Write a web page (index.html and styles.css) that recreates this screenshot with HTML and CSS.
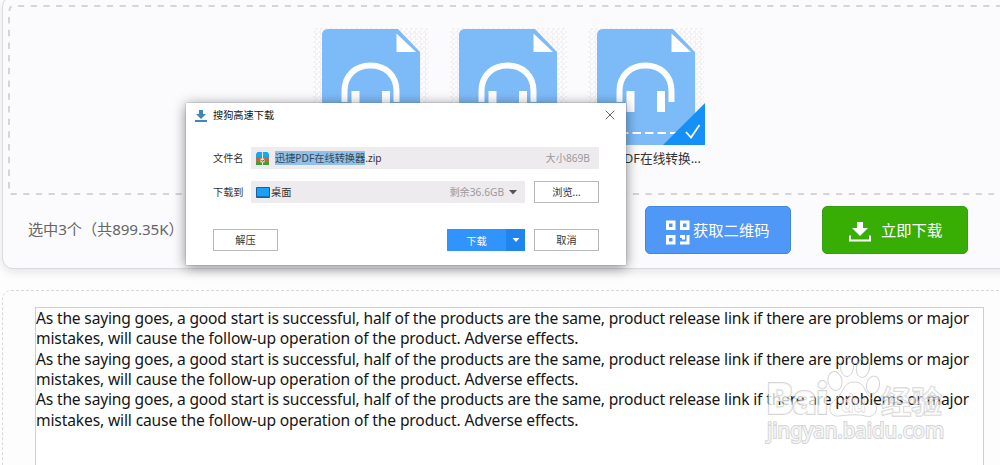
FILE: index.html
```
<!DOCTYPE html>
<html lang="zh-CN">
<head>
<meta charset="utf-8">
<title>下载</title>
<link rel="stylesheet" href="styles.css">
</head>
<body>
<svg width="0" height="0" class="defs" aria-hidden="true">
  <defs>
    <symbol id="audio-file" viewBox="0 0 98 116">
      <path d="M6 0H76L98 23V116H0V6Q0 0 6 0Z" fill="#7dbbf8"/>
      <path d="M74.500 4.500V23H94Z" fill="#fff"/>
      <path d="M22.500 73V62C22.500 46 34 36.500 48.500 36.500S74.500 46 74.500 62V73" fill="none" stroke="#fff" stroke-width="6"/>
      <path d="M29.500 62h8v21h-8zM60 62h8v21h-8z" fill="#fff"/>
      <path d="M0 104H98" stroke="#fff" stroke-width="2" stroke-dasharray="8.500 4" stroke-dashoffset="2"/>
    </symbol>
  </defs>
</svg>
<main class="page">
  <section class="panel">
    <div class="drop">
      <svg class="drop-line" width="1010" height="190">
        <path d="M10 1H1010" stroke-dasharray="6.200 6.500"/>
        <path d="M1 12V189" stroke-dasharray="6.500 6.200"/>
        <path d="M1.500 6Q1.500 2.500 3.500 1.500"/>
        <path d="M2.500 189H986" stroke-dasharray="6.200 6.500"/>
      </svg>
      <div class="files">
        <figure class="file"><div class="thumb"><svg class="doc"><use href="#audio-file"/></svg></div></figure>
        <figure class="file"><div class="thumb"><svg class="doc"><use href="#audio-file"/></svg></div></figure>
        <figure class="file">
          <div class="thumb"><svg class="doc"><use href="#audio-file"/></svg>
            <svg class="tick" viewBox="0 0 42 42"><path d="M42 0V42H0Z" fill="#1490f7"/><path d="M23 29L28 34.500L36.500 22" fill="none" stroke="#fff" stroke-width="1.800"/></svg>
          </div>
          <figcaption>迅捷PDF在线转换...</figcaption>
        </figure>
      </div>
    </div>
    <div class="bar">
      <span class="count">选中3个（共899.35K）</span>
      <button class="big blue">
        <svg width="24" height="25" viewBox="0 0 24 25" fill="none" stroke="#fff" stroke-width="3"><path d="M1.500 2h6.500v6.500H1.500zM15.500 2H22v6.500h-6.500zM1.500 16.500h6.500V23H1.500z"/><path d="M14 23h8V15M14 16.500h3.500v3"/></svg>
        <span class="qr">获取二维码</span>
      </button>
      <button class="big green">
        <svg width="22" height="20" viewBox="0 0 22 20"><path d="M8 0h6v6h5l-8 8-8-8h5z" fill="#fff"/><path d="M1 13.500V18.500H21V13.500" fill="none" stroke="#fff" stroke-width="2"/></svg>
        <span class="now">立即下载</span>
      </button>
    </div>
  </section>

  <section class="result">
    <div class="paper">
      <p class="first">As the saying goes, a good start is successful, half of the products are the same, product release link if there are problems or major</p>
      <p class="second">mistakes, will cause the follow-up operation of the product. Adverse effects.</p>
      <p class="first">As the saying goes, a good start is successful, half of the products are the same, product release link if there are problems or major</p>
      <p class="second">mistakes, will cause the follow-up operation of the product. Adverse effects.</p>
      <p class="first">As the saying goes, a good start is successful, half of the products are the same, product release link if there are problems or major</p>
      <p class="second">mistakes, will cause the follow-up operation of the product. Adverse effects.</p>
    </div>
  </section>
</main>

<section class="dialog">
  <header class="head">
    <svg width="12" height="12" viewBox="0 0 12 12" fill="#3e86bd"><path d="M4 0h4v4h3L6 9 1 4h3zM0 10h12v2H0z"/></svg>
    <h1>搜狗高速下载</h1>
    <svg class="close" width="10" height="10" viewBox="0 0 10 10"><path d="M.7.700l8.600 8.600M9.300.700L.7 9.300" stroke="#666" stroke-width="1"/></svg>
  </header>
  <div class="row">
    <label>文件名</label>
    <div class="field">
      <svg class="zip" width="13" height="13" viewBox="0 0 13 13"><path d="M1.500 0H6v5H0V2zM7 0h4.500L13 2v3H7z" fill="#18a9e8"/><path d="M0 5h6v5H0zM7 5h6v5H7z" fill="#b9694a"/><path d="M0 10h6v3H0zM7 10h6v3H7z" fill="#3f9e3a"/><path d="M6 0h1v7H6z" fill="#d8eef5"/><path d="M4.500 6.500h4v4h-4z" fill="#efe3a0"/><path d="M5.500 8l1 1.500 2-2" fill="none" stroke="#54713a"/></svg>
      <span class="name"><mark>迅捷PDF在线转换器</mark>.zip</span>
      <span class="hint size">大小869B</span>
    </div>
  </div>
  <div class="row">
    <label>下载到</label>
    <div class="field">
      <svg class="desk" width="14" height="11" viewBox="0 0 14 11"><path d="M.5.500h13v10H.5z" fill="#18a0fb" stroke="#1c5f91"/><path d="M1 9.500h12" stroke="#1873b4"/></svg>
      <span class="folder">桌面</span>
      <span class="hint free">剩余36.6GB</span>
      <svg class="caret" width="8" height="5"><path d="M0 0h8L4 4.500z" fill="#555"/></svg>
    </div>
    <button class="small">浏览...</button>
  </div>
  <div class="row last">
    <button class="small">解压</button>
    <div class="go"><button class="go-main">下载</button><button class="go-more"><svg width="8" height="5"><path d="M.5 0h7L4 4z" fill="#fff"/></svg></button></div>
    <button class="small">取消</button>
  </div>
</section>

<svg class="mark" width="200" height="100" viewBox="0 0 200 100">
  <g class="ghost">
    <g class="paw">
      <ellipse cx="75" cy="24" rx="7" ry="9.500" transform="rotate(-12 75 24)"/>
      <ellipse cx="87" cy="10" rx="6.500" ry="9.500"/>
      <ellipse cx="103" cy="11" rx="6.500" ry="9.500" transform="rotate(12 103 11)"/>
      <ellipse cx="113" cy="28" rx="6.500" ry="9" transform="rotate(12 113 28)"/>
      <path d="M94 25C83 25 84 36 76 42C66 49 69 60 79 59C87 58 99 57 105 59C117 62 120 49 112 42C103 35 106 25 94 25Z"/>
    </g>
    <text class="logo" x="7" y="57" textLength="61" lengthAdjust="spacingAndGlyphs">Bai</text>
    <text class="du" x="81" y="55" textLength="25" lengthAdjust="spacingAndGlyphs">du</text>
    <text class="cn" x="121" y="56" textLength="61" lengthAdjust="spacingAndGlyphs">经验</text>
    <text class="url" x="7" y="81" textLength="177" lengthAdjust="spacingAndGlyphs">jingyan.baidu.com</text>
  </g>
</svg>
</body>
</html>
```
FILE: styles.css
```
* { box-sizing: border-box; }
body { margin: 0; width: 1000px; height: 465px; overflow: hidden; background: #fdfdfd; font-family: "Noto Sans", "Noto Sans CJK SC", sans-serif; position: relative; }
button { padding: 0; font-family: inherit; margin: 0; }
p, h1, figure { margin: 0; }
svg { display: block; flex: none; }
.defs { position: absolute; }
.page { width: 1030px; height: 465px; overflow: hidden; padding-left: 2px; }

.panel { height: 273px; margin-top: -4px; border: 1px solid #dcdadf; border-radius: 11px; background: #fbfafd; box-shadow: 0 3px 9px rgba(60, 50, 70, .12); padding: 8px 0 0 5px; }
.drop { height: 190px; position: relative; padding: 23px 0 0 305px; }
.drop-line { position: absolute; left: 0; top: 0; fill: none; stroke: #d5d4d7; stroke-width: 2; }
.files { display: flex; gap: 21px; }
.file { width: 116.400px; flex: none; }
.thumb { height: 117px; padding: 1px 0 0 9px; position: relative; background: repeating-conic-gradient(#f3f1f4 0 25%, #fdfcfe 0 50%) 0 0 / 5px 5px; }
.doc { width: 98px; height: 116px; }
.tick { position: absolute; right: -.500px; bottom: 0; width: 42px; height: 42px; }
figcaption { font-size: 12.700px; line-height: 18px; text-align: center; color: #333; padding-top: 4px; white-space: nowrap; }
.bar { display: flex; padding: 10px 0 0 20px; }
.count { width: 617px; font-size: 15.200px; line-height: 48px; color: #666; white-space: nowrap; letter-spacing: -.08px; }
.big { height: 48px; width: 146px; border-radius: 5px; color: #fff; font-size: 15.300px; display: flex; align-items: center; margin-top: 1px; }
.big span { margin-top: -3px; }
.blue { background: #4f98f8; border: 1px solid #4386dd; padding-left: 20px; gap: 3px; margin-right: 31px; }
.blue svg { margin-top: 4px; }
.green { background: #38ae05; border: 1px solid #3a9a18; padding-left: 26px; gap: 10px; }
.green svg { margin-top: 4px; }

.result { height: 200px; margin-top: 21px; border: 1px dashed #d9d9db; border-radius: 9px; padding: 16px 0 0 32px; }
.paper { width: 949px; height: 190px; border: 1px solid #d0ced2; background: #fff; font-size: 15.600px; line-height: 20.350px; color: #151515; white-space: nowrap; }
.first { letter-spacing: -.180px; }
.second { letter-spacing: -.135px; }

.dialog { position: absolute; left: 186px; top: 103px; width: 440px; height: 162px; background: #fff; box-shadow: 0 0 1px #777, 0 2px 12px rgba(0, 0, 0, .48); font-size: 10.200px; color: #333; padding: 6px 27px 0; }
.head { height: 38px; display: flex; align-items: flex-start; margin: 0 -16px 0 -18px; }
.head > svg { margin-top: 1px; }
.head h1 { font-size: 10.200px; line-height: 14px; font-weight: 400; color: #111; margin: -1px 0 0 6px; }
.head .close { margin-left: auto; }
.row { display: flex; height: 22px; margin-bottom: 12px; line-height: 22px; }
.row label { width: 38px; flex: none; }
.field { flex: 1; background: #edebed; display: flex; align-items: center; padding-left: 5px; white-space: nowrap; }
.name { margin-left: 6px; line-height: 14px; }
mark { background: #91bfe5; color: #31485c; display: inline-block; height: 14px; line-height: 14px; }
.hint { margin-left: auto; color: #9b999d; }
.size { margin-right: 9px; }
.folder { margin-left: 1px; }
.free { margin-right: 5px; }
.caret { margin-right: 8px; }
.small { width: 65px; height: 22px; border: 1px solid #b9b9bb; background: #fff; font-size: 10.200px; line-height: 19px; color: #333; }
.row .field + .small { margin-left: 9px; }
.last { margin-top: 26px; justify-content: flex-start; }
.go { display: flex; margin: 0 9px 0 auto; width: 78px; }
.go-main { width: 59px; border: 0; background: #3194fc; color: #fff; font-size: 10.200px; }
.go-more { width: 19px; border: 0; background: #1f84ee; display: grid; place-items: center; }

.mark { position: absolute; left: 760px; top: 357px; }
.ghost { fill: rgba(255, 255, 255, .75); stroke: rgba(185, 185, 185, .6); stroke-width: 1; }
.ghost text { paint-order: stroke; stroke-width: 2; }
.paw { fill: none; }
.logo { font: 900 42px Inter, sans-serif; }
.ghost .du { font: 700 24px Inter, sans-serif; fill: rgba(255, 255, 255, .5); stroke-width: 1; }
.ghost .cn { font: bold 31px "Noto Sans CJK SC", sans-serif; fill: rgba(255, 255, 255, .5); stroke-width: 1.400px; }
.url { font: 21px "Noto Sans", sans-serif; }
```
